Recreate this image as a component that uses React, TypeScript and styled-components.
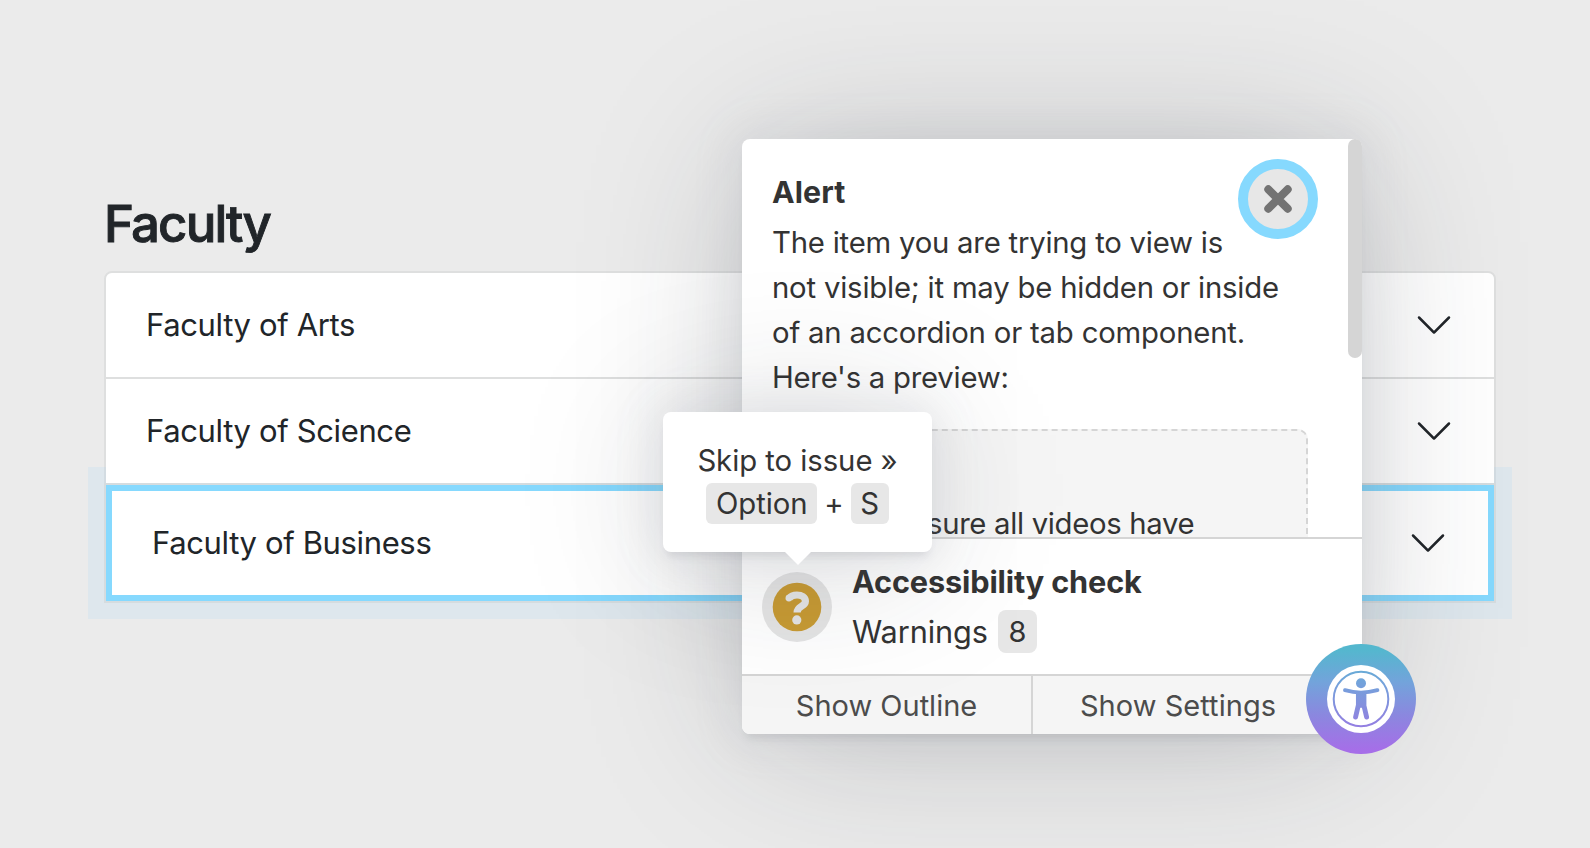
import React from "react";
import styled, { createGlobalStyle, css } from "styled-components";

const GlobalStyle = createGlobalStyle`
  *, *::before, *::after { box-sizing: border-box; }
  body {
    margin: 0;
    background: #ebebeb;
    font-family: Inter, "Liberation Sans", sans-serif;
    -webkit-font-smoothing: antialiased;
  }
`;

const elevation = css`
  box-shadow:
    0 0 40px 8px rgba(154, 161, 177, 0.15),
    0 8px 160px -16px rgba(36, 40, 47, 0.25),
    0 8px 8px -4px rgba(91, 94, 105, 0.15);
`;

const Page = styled.main`
  position: relative;
  width: 1590px;
  height: 848px;
  overflow: hidden;
  padding: 192px 94px 0 104px;
  color: #212529;
`;

const Heading = styled.h2`
  margin: 0 0 15px;
  font-size: 51px;
  line-height: 64px;
  font-weight: 500;
  letter-spacing: -1.9px;
  -webkit-text-stroke: 0.9px currentColor;
`;

const Accordion = styled.div`
  border: 2px solid #dedfdf;
  border-radius: 8px;
`;

const AccordionButton = styled.button<{ $highlight?: boolean }>`
  position: relative;
  z-index: 1;
  display: flex;
  align-items: center;
  justify-content: space-between;
  width: 100%;
  padding: 32px 40px;
  border: 0;
  background: #fff;
  color: inherit;
  font: 400 31px/40px Inter, "Liberation Sans", sans-serif;
  letter-spacing: -0.36px;
  text-align: left;

  &:first-child { border-radius: 6px 6px 0 0; }
  & + & { border-top: 2px solid #dedfdf; }

  ${(p) =>
    p.$highlight &&
    css`
      && {
        z-index: 0;
        margin-top: 2px;
        border: 6px solid #86d9fe;
        box-shadow: 0 0 0 2px #d5dcdf, 0 0 0 18px rgba(134, 205, 254, 0.12);
      }
    `}
`;

const Chevron = () => (
  <svg width="40" height="40" viewBox="0 0 16 16" fill="#212529" aria-hidden>
    <path
      fillRule="evenodd"
      d="M1.646 4.646a.5.5 0 0 1 .708 0L8 10.293l5.646-5.647a.5.5 0 0 1 .708.708l-6 6a.5.5 0 0 1-.708 0l-6-6a.5.5 0 0 1 0-.708z"
    />
  </svg>
);

const Panel = styled.section`
  position: absolute;
  z-index: 2;
  left: 742px;
  top: 139px;
  width: 620px;
  height: 595px;
  display: flex;
  flex-direction: column;
  border-radius: 8px;
  background: #fff;
  color: #333;
  ${elevation}
`;

const AlertArea = styled.div`
  position: relative;
  height: 398px;
  overflow: hidden;
  padding: 31px 54px 0 30px;
`;

const AlertTitle = styled.h3`
  margin: 0;
  font-size: 30.3px;
  line-height: 45px;
  font-weight: 700;
  letter-spacing: 0.1px;
`;

const AlertText = styled.p`
  margin: 5px 0 29px;
  font-size: 29.3px;
  line-height: 45px;
`;

const Line = styled.span<{ $track?: number }>`
  display: block;
  white-space: nowrap;
  letter-spacing: ${(p) => p.$track ?? -0.19}px;
`;

const Preview = styled.div`
  height: 180px;
  padding: 70px 20px 0 153px;
  border: 2px dashed #d5d5d5;
  border-radius: 10px;
  background: #f5f5f5;
  font-size: 29.3px;
  line-height: 45px;
`;

const CloseButton = styled.button`
  position: absolute;
  left: 496px;
  top: 20px;
  width: 80px;
  height: 80px;
  display: grid;
  place-items: center;
  padding: 0;
  border: 10px solid #86d9fe;
  border-radius: 50%;
  background: #e7e7e7;
`;

const ScrollThumb = styled.div`
  position: absolute;
  right: 0;
  top: 0;
  width: 14px;
  height: 219px;
  border-radius: 7px;
  background: #d5d5d5;
`;

const Status = styled.div`
  display: flex;
  align-items: flex-start;
  gap: 20px;
  height: 137px;
  padding: 33px 20px 0;
  border-top: 2px solid #d5d5d5;
`;

const SkipButton = styled.button`
  display: grid;
  place-items: center;
  width: 70px;
  height: 70px;
  padding: 0;
  border: 0;
  border-radius: 50%;
  background: #e5e5e5;
`;

const StatusText = styled.div`
  margin-top: -13px;
  font-size: 30.7px;
`;

const StatusTitle = styled.div`
  font-weight: 700;
  line-height: 46px;
  letter-spacing: -0.15px;
`;

const StatusLine = styled.div`
  display: flex;
  align-items: center;
  gap: 10px;
  margin-top: 5px;
  line-height: 43px;
  letter-spacing: -0.1px;
`;

const Badge = styled.span`
  width: 39px;
  height: 43px;
  border-radius: 8px;
  background: #e7e7e7;
  font-size: 29px;
  line-height: 43px;
  text-align: center;
`;

const Actions = styled.div`
  display: grid;
  grid-template-columns: 291px 1fr;
  height: 60px;
  border-top: 2px solid #d5d5d5;
  border-radius: 0 0 8px 8px;
  overflow: hidden;
`;

const ActionButton = styled.button`
  padding: 0;
  border: 0;
  background: #f5f5f5;
  color: #4c4c4c;
  font: 400 29px/45px Inter, "Liberation Sans", sans-serif;

  &:first-child { border-right: 2px solid #d5d5d5; }
  &:last-child { padding-right: 39px; letter-spacing: 0.05px; }
`;

const Tooltip = styled.div`
  position: absolute;
  z-index: 3;
  left: 663px;
  top: 412px;
  width: 269px;
  height: 140px;
  padding: 27px 0 0;
  border-radius: 8px;
  background: #fff;
  color: #333;
  font-size: 29.3px;
  line-height: 43px;
  letter-spacing: -0.05px;
  text-align: center;
  ${elevation}

  &::after {
    content: "";
    position: absolute;
    left: 121px;
    top: 139px;
    border: 14px solid transparent;
    border-top-color: #fff;
    border-bottom: 0;
  }
`;

const Keys = styled.div`
  display: flex;
  justify-content: center;
  align-items: center;
  gap: 7px;
`;

const Key = styled.kbd<{ $width: number }>`
  width: ${(p) => p.$width}px;
  height: 41px;
  border-radius: 6px;
  background: #e7e7e7;
  font-family: inherit;
  line-height: 42px;
`;

const Toggle = styled.button`
  position: absolute;
  z-index: 4;
  left: 1306px;
  top: 644px;
  width: 110px;
  height: 110px;
  display: grid;
  place-items: center;
  padding: 0;
  border: 0;
  border-radius: 50%;
  background: linear-gradient(#54b7ce 5%, #73a3db 35%, #8b87df 65%, #a66ee8 97%);
`;

const QuestionIcon = () => (
  <svg width="50" height="50" viewBox="0 0 50 50" fill="none" aria-hidden>
    <circle cx="25" cy="25" r="24.3" fill="#c89b34" />
    <path
      d="M17 16.4C18.8 13.9 21.4 13 25 13C29.8 13 33.4 15.3 33.4 19.2C33.4 24.8 25.1 23.8 25.1 30.4"
      stroke="#e5e5e5"
      strokeWidth="7.2"
    />
    <circle cx="16.9" cy="16.1" r="3.4" fill="#e5e5e5" />
    <circle cx="24.8" cy="37.9" r="4.6" fill="#e5e5e5" />
  </svg>
);

const PersonIcon = () => (
  <svg width="70" height="70" viewBox="0 0 70 70" aria-hidden>
    <mask id="person">
      <rect width="70" height="70" fill="#fff" />
      <circle cx="35" cy="35" r="27.3" fill="none" stroke="#000" strokeWidth="2" />
      <circle cx="35" cy="19.2" r="5" fill="#000" />
      <g stroke="#000" fill="none" strokeLinecap="round" strokeLinejoin="round">
        <path d="M19 26.2Q27 28.6 35 28.6T51.4 26.2" strokeWidth="3.9" />
        <path d="M32.4 30V41L29.6 53M37.8 30V41L40.6 53" strokeWidth="4.9" />
      </g>
      <path d="M30 28H40.2V41L36 43.8H34.2L30 41Z" fill="#000" />
    </mask>
    <circle cx="35" cy="35" r="34" fill="#fff" mask="url(#person)" />
  </svg>
);

export default function App() {
  return (
    <>
      <GlobalStyle />
      <Page>
        <Heading>Faculty</Heading>
        <Accordion>
          <AccordionButton>Faculty of Arts<Chevron /></AccordionButton>
          <AccordionButton>Faculty of Science<Chevron /></AccordionButton>
          <AccordionButton $highlight>Faculty of Business<Chevron /></AccordionButton>
        </Accordion>

        <Panel>
          <AlertArea>
            <AlertTitle>Alert</AlertTitle>
            <AlertText>
              <Line $track={-0.22}>The item you are trying to view is</Line>
              <Line>not visible; it may be hidden or inside</Line>
              <Line>of an accordion or tab component.</Line>
              <Line $track={-0.24}>Here's a preview:</Line>
            </AlertText>
            <Preview><Line $track={-0.32}>sure all videos have</Line></Preview>
            <CloseButton aria-label="Close">
              <svg width="28" height="28" viewBox="0 0 28 28" stroke="#737373" strokeWidth="8" strokeLinecap="round">
                <path d="M4.3 4.3l19.4 19.4M23.7 4.3l-19.4 19.4" />
              </svg>
            </CloseButton>
            <ScrollThumb />
          </AlertArea>
          <Status>
            <SkipButton aria-label="Skip to issue"><QuestionIcon /></SkipButton>
            <StatusText>
              <StatusTitle>Accessibility check</StatusTitle>
              <StatusLine>Warnings<Badge>8</Badge></StatusLine>
            </StatusText>
          </Status>
          <Actions>
            <ActionButton>Show Outline</ActionButton>
            <ActionButton>Show Settings</ActionButton>
          </Actions>
        </Panel>

        <Tooltip>
          <div>Skip to issue »</div>
          <Keys><Key $width={111}>Option</Key><span>+</span><Key $width={38}>S</Key></Keys>
        </Tooltip>

        <Toggle aria-label="Accessibility"><PersonIcon /></Toggle>
      </Page>
    </>
  );
}
